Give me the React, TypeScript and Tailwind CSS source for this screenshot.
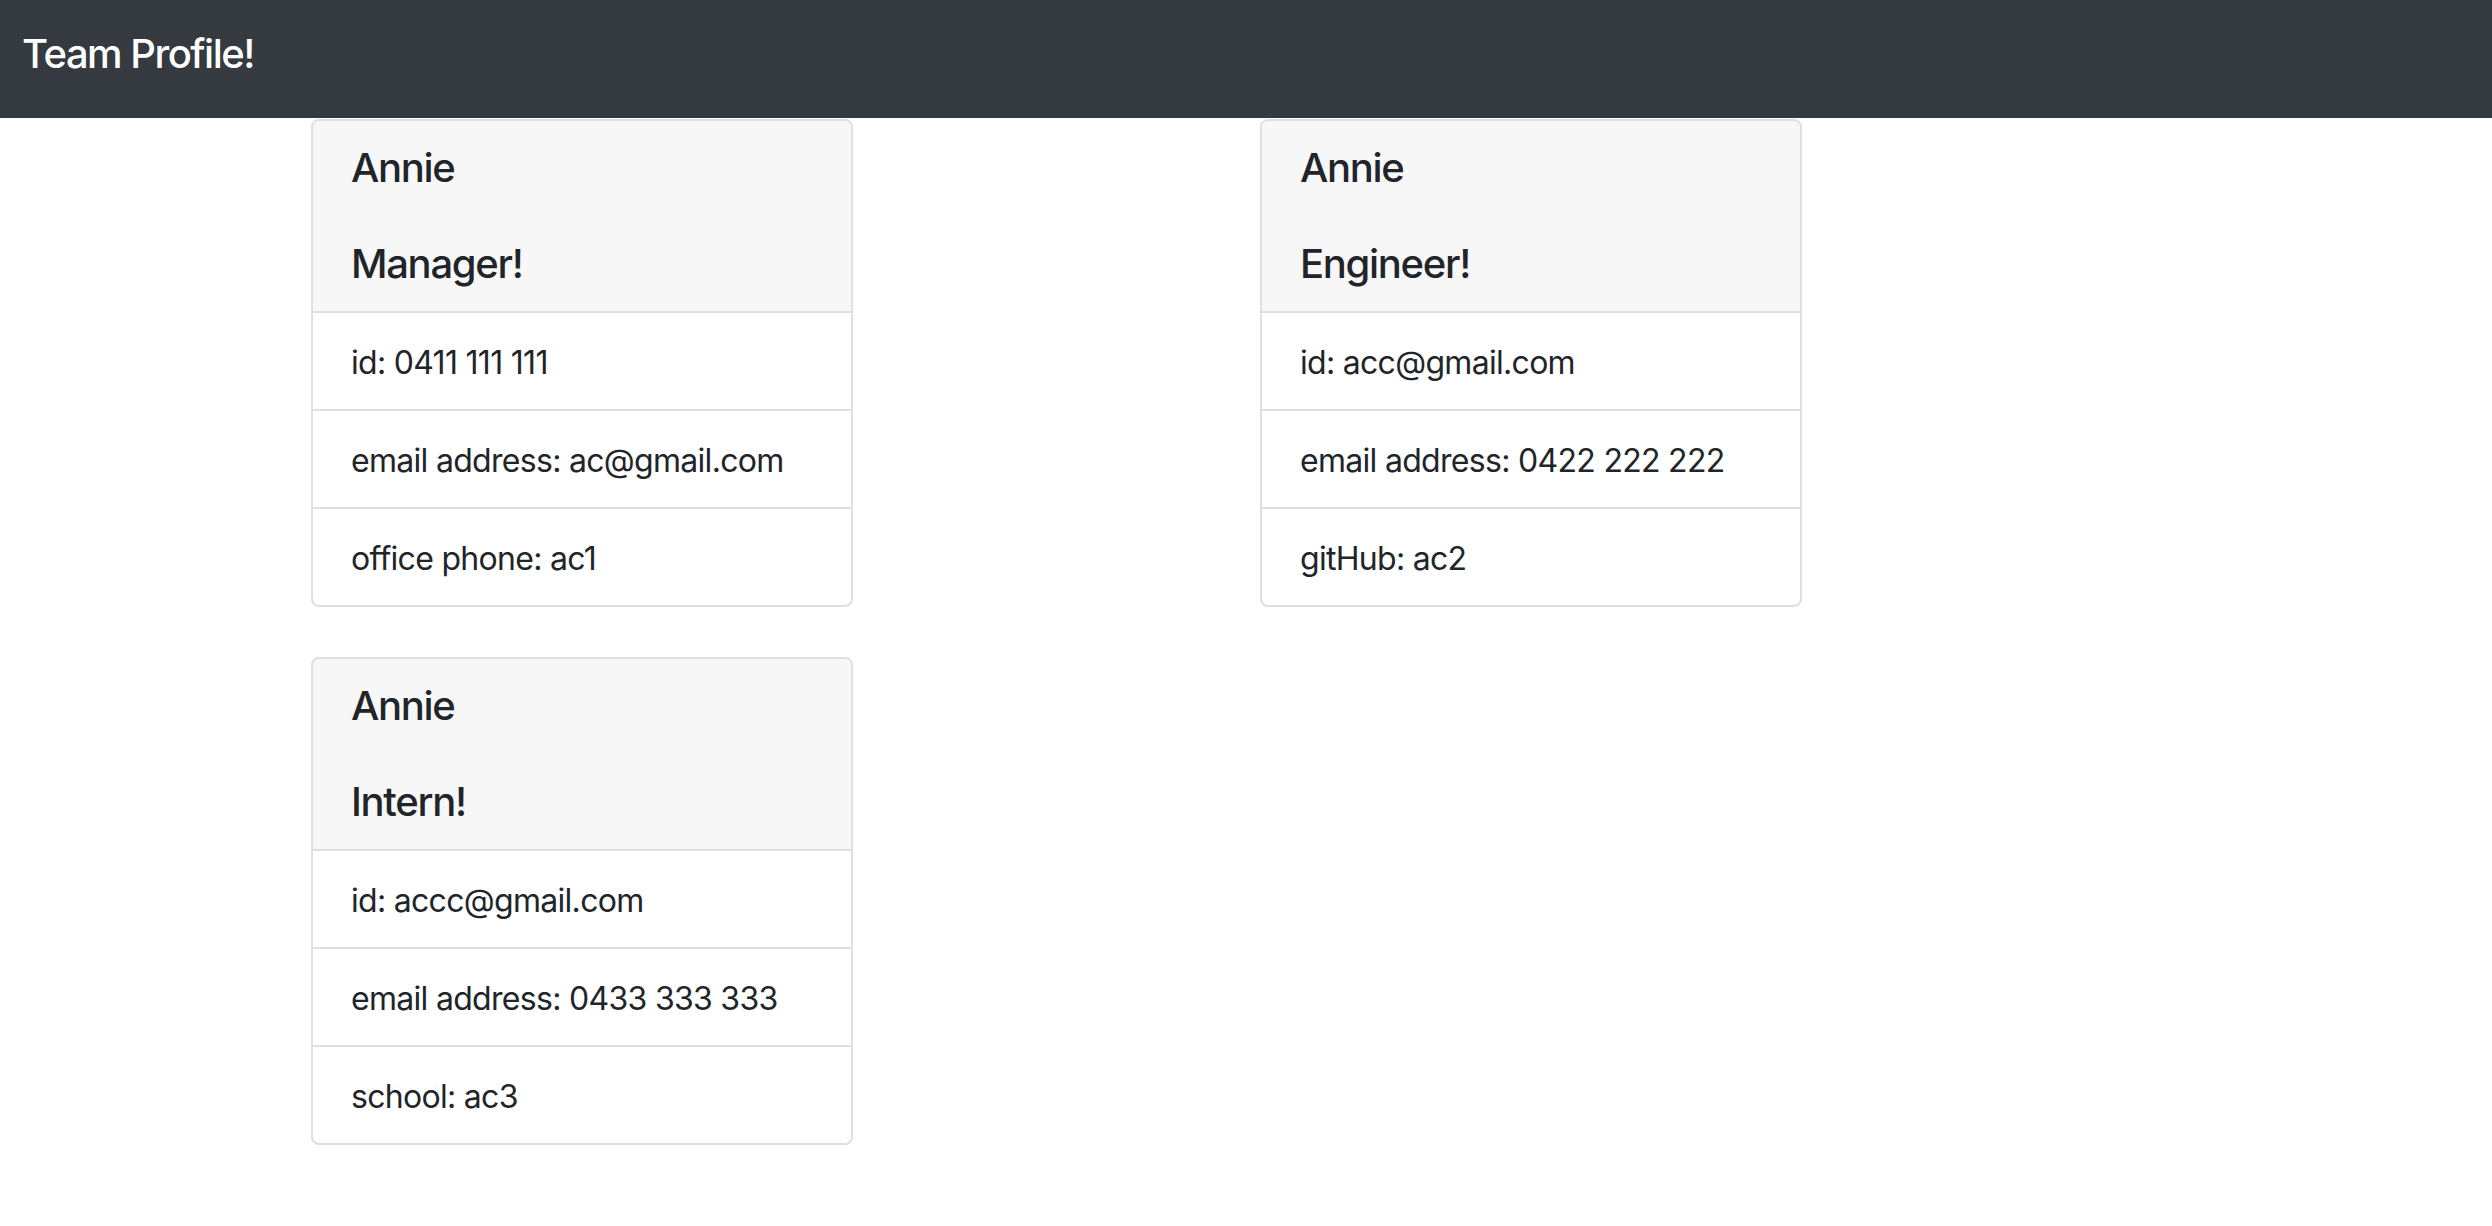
const team = [
  {
    name: "Annie",
    role: "Manager!",
    rows: ["id: 0411 111 111", "email address: ac@gmail.com", "office phone: ac1"],
  },
  {
    name: "Annie",
    role: "Engineer!",
    rows: ["id: acc@gmail.com", "email address: 0422 222 222", "gitHub: ac2"],
  },
  {
    name: "Annie",
    role: "Intern!",
    rows: ["id: accc@gmail.com", "email address: 0433 333 333", "school: ac3"],
  },
];

const ProfileCard = ({ name, role, rows }: { name: string; role: string; rows: string[] }) => {
  return (
    <div className="w-[542px] border-2 border-[#dfdfdf] rounded-[8px] overflow-hidden bg-white">
      {/* header */}
      <div className="bg-[#f7f7f7] border-b-2 border-[#dfdfdf] px-[38px] pt-[23px] pb-[23px] text-[40px] leading-[48px] font-medium tracking-[-1.3px] text-[#212529]">
        <div>{name}</div>
        <div className="mt-[48px]">{role}</div>
      </div>

      {rows.map((row, i) => (
        <div
          key={row}
          className={
            i < rows.length - 1
              ? "px-[38px] pt-[26px] pb-[22px] text-[32px] leading-[48px] tracking-[-0.7px] text-[#212529] border-b-2 border-[#dfdfdf]"
              : "px-[38px] pt-[26px] pb-[22px] text-[32px] leading-[48px] tracking-[-0.7px] text-[#212529]"
          }
        >
          {row}
        </div>
      ))}
    </div>
  );
};

export default function App() {
  return (
    <div className="min-h-screen bg-white font-['Inter','Noto_Sans',sans-serif]">
      <nav className="h-[118px] bg-[#343a40] px-[22px] pt-[30px]">
        <div className="text-[40px] leading-[48px] font-medium text-white tracking-[-1.5px]">
          Team Profile!
        </div>
      </nav>

      <div className="grid grid-cols-[542px_542px] gap-x-[407px] gap-y-[50px] pl-[311px] pt-[1px]">
        {team.map((member) => (
          <ProfileCard key={member.role} {...member} />
        ))}
      </div>
    </div>
  );
}
